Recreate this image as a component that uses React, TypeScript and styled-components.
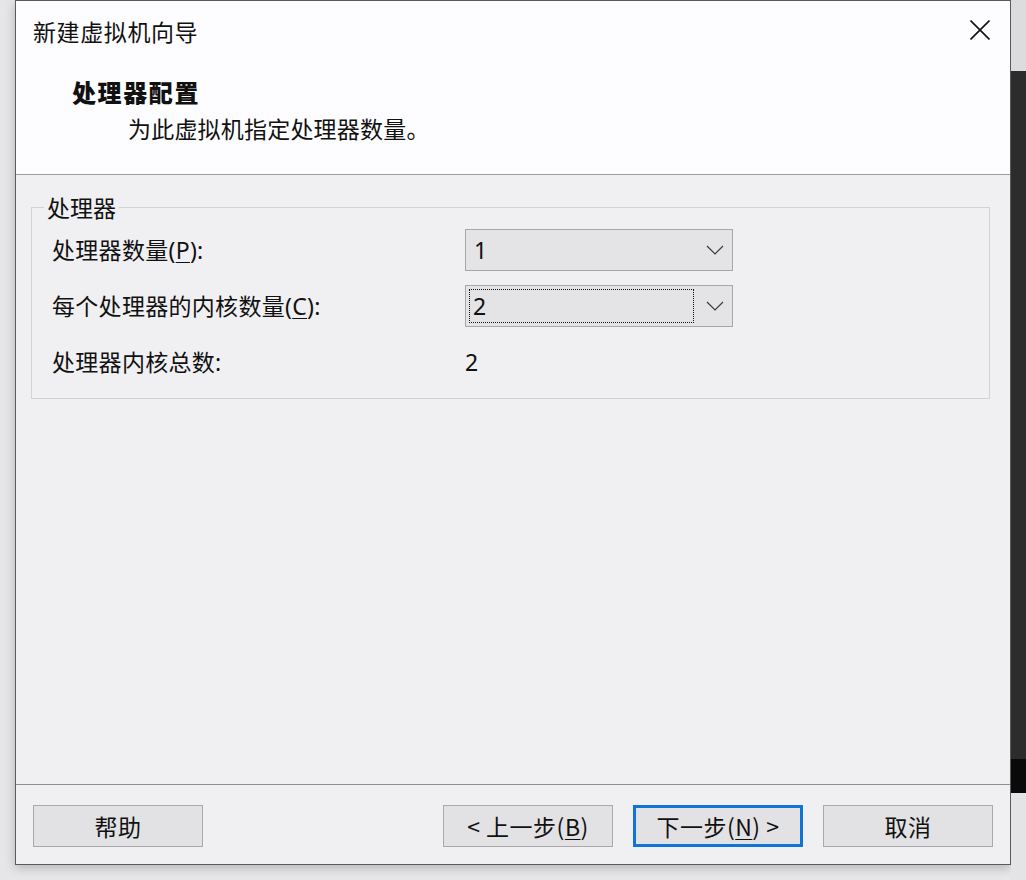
import React from "react";
import styled, { createGlobalStyle } from "styled-components";

const GlobalStyle = createGlobalStyle`
  html, body {
    margin: 0;
    padding: 0;
    background: #e7e6e9;
  }
  body {
    font-family: "Noto Sans", "Noto Sans CJK SC", sans-serif;
    color: #111;
  }
`;

const Stage = styled.div`
  display: flex;
  width: 1026px;
  height: 880px;
  overflow: hidden;
`;

const Gutter = styled.div`
  width: 15px;
  flex: none;
  background: #e6e5e8;
`;

const RightStrip = styled.div`
  width: 15px;
  flex: none;
  display: flex;
  flex-direction: column;
`;

const StripPart = styled.div<{ $h?: number; $bg: string }>`
  background: ${(p) => p.$bg};
  ${(p) => (p.$h ? `height: ${p.$h}px; flex: none;` : "flex: 1;")}
`;

const Window = styled.div`
  width: 996px;
  height: 865px;
  box-sizing: border-box;
  flex: none;
  display: flex;
  flex-direction: column;
  border: 1px solid #5a5a5c;
  background: #f0eff2;
  box-shadow: 0 3px 10px rgba(0, 0, 0, 0.22);
`;

const Header = styled.div`
  height: 174px;
  box-sizing: border-box;
  flex: none;
  background: #fdfcfe;
  border-bottom: 1px solid #9c9c9e;
  padding: 15px 20px 0 17px;
`;

const TitleRow = styled.div`
  display: flex;
  align-items: center;
  justify-content: space-between;
  height: 30px;
`;

const WindowTitle = styled.div`
  font-family: "Noto Sans CJK SC", sans-serif;
  font-size: 23px;
  line-height: 30px;
  letter-spacing: 0.6px;
`;

const CloseButton = styled.div`
  width: 20px;
  height: 20px;
  display: flex;
  margin-top: -2px;
`;

const Heading = styled.div`
  margin: 30px 0 0 39px;
  font-family: "Noto Sans CJK SC", sans-serif;
  font-weight: 900;
  font-size: 24px;
  line-height: 32px;
  letter-spacing: 1.6px;
`;

const SubHeading = styled.div`
  margin: 5px 0 0 95px;
  font-family: "Noto Sans CJK SC", sans-serif;
  font-size: 23px;
  line-height: 30px;
  letter-spacing: 0.2px;
`;

const Body = styled.div`
  flex: 1;
  padding: 17px 20px 0 15px;
`;

const Group = styled.fieldset`
  margin: 0;
  border: 1px solid #d3d2d6;
  padding: 7px 20px 15px 20px;
`;

const Legend = styled.legend`
  font-family: "Noto Sans CJK SC", sans-serif;
  font-size: 23px;
  line-height: 30px;
  padding: 0 3px;
  margin-left: -8px;
`;

const Rows = styled.div`
  display: grid;
  grid-template-columns: 413px 268px;
  grid-auto-rows: 42px;
  row-gap: 14px;
  align-items: center;
`;

const Label = styled.div`
  font-size: 23px;
  line-height: 30px;
  letter-spacing: 0.3px;
`;

const Value = styled.div`
  font-size: 23px;
  line-height: 30px;
`;

const Combo = styled.div`
  height: 42px;
  box-sizing: border-box;
  border: 1px solid #a7a6a9;
  background: #e4e3e6;
  display: flex;
  align-items: center;
  padding: 0 8px 0 3px;
`;

const ComboText = styled.div<{ $focused?: boolean }>`
  flex: 1;
  align-self: stretch;
  margin: 3px 12px 3px 0;
  display: flex;
  align-items: center;
  padding-left: ${(p) => (p.$focused ? 3 : 4)}px;
  font-size: 23px;
  border: 1px ${(p) => (p.$focused ? "dotted #111" : "solid transparent")};
`;

const Footer = styled.div`
  flex: none;
  height: 80px;
  box-sizing: border-box;
  border-top: 1px solid #8f8f91;
  display: flex;
  align-items: flex-start;
  padding: 20px 17px 0 17px;
  gap: 20px;
`;

const Spacer = styled.div`
  flex: 1;
`;

const Button = styled.div<{ $default?: boolean }>`
  width: 170px;
  height: 42px;
  box-sizing: border-box;
  display: flex;
  align-items: center;
  justify-content: center;
  background: #e2e1e4;
  border: ${(p) => (p.$default ? "3px solid #0f74d3" : "1px solid #a9a8ab")};
  font-family: "Noto Sans CJK SC", sans-serif;
  font-size: 23px;
  letter-spacing: 0.5px;
`;

const Key = styled.span`
  text-decoration: underline;
  text-underline-offset: 3px;
  text-decoration-thickness: 1px;
`;

const Chevron = () => (
  <svg width="18" height="10" viewBox="0 0 18 10">
    <polyline points="1,1 9,9 17,1" fill="none" stroke="#3a3a3a" strokeWidth="1.2" />
  </svg>
);

const CloseIcon = () => (
  <svg width="20" height="20" viewBox="0 0 20 20">
    <path d="M0.5 0.5 L19.5 19.5 M19.5 0.5 L0.5 19.5" stroke="#111" strokeWidth="1.6" />
  </svg>
);

export default function App() {
  return (
    <>
      <GlobalStyle />
      <Stage>
        <Gutter />
        <Window>
          <Header>
            <TitleRow>
              <WindowTitle>新建虚拟机向导</WindowTitle>
              <CloseButton>
                <CloseIcon />
              </CloseButton>
            </TitleRow>
            <Heading>处理器配置</Heading>
            <SubHeading>为此虚拟机指定处理器数量。</SubHeading>
          </Header>
          <Body>
            <Group>
              <Legend>处理器</Legend>
              <Rows>
                <Label>
                  处理器数量(<Key>P</Key>):
                </Label>
                <Combo>
                  <ComboText>1</ComboText>
                  <Chevron />
                </Combo>
                <Label>
                  每个处理器的内核数量(<Key>C</Key>):
                </Label>
                <Combo>
                  <ComboText $focused>2</ComboText>
                  <Chevron />
                </Combo>
                <Label>处理器内核总数:</Label>
                <Value>2</Value>
              </Rows>
            </Group>
          </Body>
          <Footer>
            <Button>帮助</Button>
            <Spacer />
            <Button>
              &lt; 上一步(<Key>B</Key>)
            </Button>
            <Button $default>
              下一步(<Key>N</Key>) &gt;
            </Button>
            <Button>取消</Button>
          </Footer>
        </Window>
        <RightStrip>
          <StripPart $h={71} $bg="#dcdbde" />
          <StripPart $bg="#2c2c2c" />
          <StripPart $h={34} $bg="#0a0a0a" />
          <StripPart $h={87} $bg="#e4e3e6" />
        </RightStrip>
      </Stage>
    </>
  );
}
